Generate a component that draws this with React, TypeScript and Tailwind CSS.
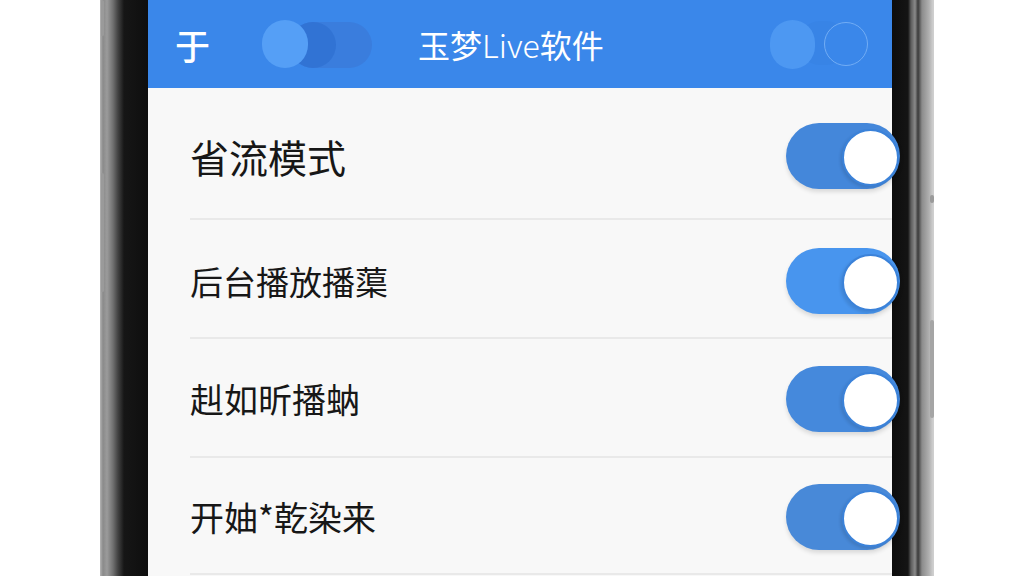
const rows = [
  { label: '省流模式', size: 'text-[39px]', h: 'h-[130px] pt-[6px]', pill: 'bg-[#4487da]' },
  { label: '后台播放播蕖', size: 'text-[33px]', h: 'h-[117px] pt-[5px]', pill: 'bg-[#4895ee]' },
  { label: '赳如昕播蚋', size: 'text-[34px]', h: 'h-[117px] pt-[2px]', pill: 'bg-[#4589dc]' },
  { label: '开妯*乾染来', size: 'text-[34px]', h: 'h-[115px] pt-[2px]', pill: 'bg-[#4889d8]' },
];

function Toggle({ pill }: { pill: string }) {
  return (
    <div className={`relative z-10 w-[114px] h-[66px] mr-[-8px] rounded-full ${pill} shadow-[0_3px_4px_rgba(0,0,0,0.12)]`}>
      <div className="absolute right-[1px] top-[6px] w-[57px] h-[57px] rounded-full bg-white border-2 border-[#3b82d9] shadow-[-2px_2px_3px_rgba(0,0,0,0.1)]" />
    </div>
  );
}

function Header() {
  return (
    <div className="h-[88px] shrink-0 bg-[#3a87ea] flex items-center text-white">
      <span className="ml-[27px] w-[36px] text-[35px] leading-none font-medium">于</span>

      {/* half-drawn switch */}
      <div className="relative ml-[51px] w-[110px] h-[50px]">
        <div className="absolute left-[28px] top-[3px] w-[82px] h-[46px] rounded-full bg-[#3a7ddd]" />
        <div className="absolute left-[28px] top-[3px] w-[46px] h-[46px] rounded-full bg-[#3173d4]" />
        <div className="absolute left-0 top-[1px] w-[46px] h-[48px] rounded-full bg-[#559ff6]" />
      </div>

      <span className="ml-[46px] w-[190px] text-[32px] leading-none whitespace-nowrap">
        玉梦<span className="font-light">Live</span>软件
      </span>

      <div className="relative ml-[162px] w-[100px] h-[50px]">
        <div className="absolute left-[28px] top-[2px] w-[50px] h-[44px] rounded-full bg-[#3884e6]" />
        <div className="absolute left-0 top-[1px] w-[45px] h-[49px] rounded-full bg-[#4d98f2]" />
        <div className="absolute left-[54px] top-[3px] w-[44px] h-[44px] rounded-full border-[1.5px] border-[#72adf5] bg-[#3a87ea]" />
      </div>
    </div>
  );
}

export default function App() {
  return (
    <div className="w-[1024px] h-[576px] bg-white flex overflow-hidden font-['Noto_Sans_CJK_SC',sans-serif]">
      <div className="w-[100px] shrink-0" />

      {/* left frame */}
      <div className="relative w-[48px] shrink-0 bg-[linear-gradient(to_right,#b4b4b4_0px,#8a8a8a_3px,#9b9b9b_7px,#707070_13px,#424242_18px,#161616_24px,#0e0e0e_48px)]">
        <div className="absolute left-[1px] top-[0px] w-[3px] h-[36px] rounded-sm bg-[#9a9a9a]" />
        <div className="absolute left-[1px] top-[173px] w-[3px] h-[119px] rounded-sm bg-[#9a9a9a]" />
      </div>

      <div className="w-[744px] shrink-0 flex flex-col bg-[#f8f8f8]">
        <Header />
        {rows.map((r) => (
          <div key={r.label} className="flex flex-col">
            <div className={`${r.h} flex items-center pl-[42px]`}>
              <span className={`${r.size} leading-none text-[#171717]`}>{r.label}</span>
              <div className="ml-auto">
                <Toggle pill={r.pill} />
              </div>
            </div>
            <div className="ml-[42px] h-[2px] bg-[#e9e9e9]" />
          </div>
        ))}
      </div>

      {/* right frame */}
      <div className="relative w-[42px] shrink-0 bg-[linear-gradient(to_right,#0d0d0d_0px,#141414_16px,#5c5c5c_19px,#8a8a8a_23px,#3a3a3a_26px,#8c8c8c_30px,#b0b0b0_37px,#cfcfcf_41px)]">
        <div className="absolute right-[0px] top-[195px] w-[4px] h-[8px] rounded-sm bg-[#9a9a9a]" />
        <div className="absolute right-[0px] top-[320px] w-[4px] h-[98px] rounded-sm bg-[#a5a5a5]" />
      </div>
    </div>
  );
}
